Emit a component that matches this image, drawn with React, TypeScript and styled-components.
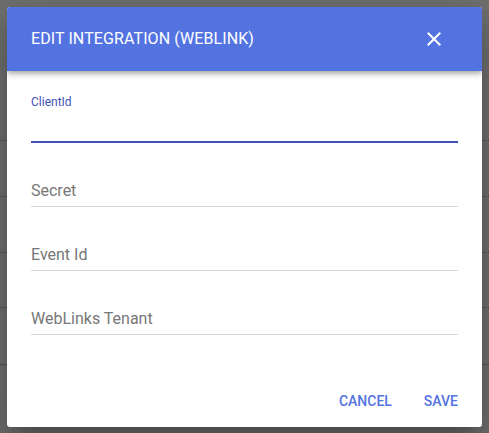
import React from "react";
import styled, { createGlobalStyle } from "styled-components";

const GlobalStyle = createGlobalStyle`
  html, body { margin: 0; padding: 0; }
  body {
    font-family: Roboto, "Noto Sans", "Liberation Sans", sans-serif;
    background: #ffffff;
    width: 489px;
    height: 433px;
    overflow: hidden;
  }
  * { box-sizing: border-box; }
`;

const Page = styled.div`
  width: 489px;
  height: 433px;
  position: relative;
  background: #ffffff;
  display: flex;
  flex-direction: column;
`;

const PageHead = styled.div`
  height: 141px;
  border-bottom: 1px dotted rgba(0, 0, 0, 0.35);
`;

const PageRow = styled.div<{ $solid?: boolean; $h: number }>`
  height: ${(p) => p.$h}px;
  border-bottom: 1px ${(p) => (p.$solid ? "solid rgba(0,0,0,0.25)" : "dotted rgba(0,0,0,0.35)")};
`;

const Overlay = styled.div`
  position: absolute;
  inset: 0;
  background: rgba(0, 0, 0, 0.56);
  display: flex;
  justify-content: center;
  align-items: flex-start;
  padding-top: 7px;
`;

const Dialog = styled.div`
  width: 475px;
  height: 420px;
  background: #ffffff;
  border-radius: 3px;
  overflow: hidden;
  display: flex;
  flex-direction: column;
  box-shadow: 0 11px 15px -7px rgba(0, 0, 0, 0.2), 0 24px 38px 3px rgba(0, 0, 0, 0.14),
    0 9px 46px 8px rgba(0, 0, 0, 0.12);
`;

const Header = styled.header`
  height: 64px;
  flex: none;
  background: #5373e1;
  display: flex;
  align-items: center;
  justify-content: space-between;
  padding: 0 24px;
  position: relative;
  z-index: 1;
  box-shadow: 0 2px 4px -1px rgba(0, 0, 0, 0.2), 0 4px 5px 0 rgba(0, 0, 0, 0.14),
    0 1px 10px 0 rgba(0, 0, 0, 0.12);
`;

const Title = styled.h2`
  margin: 0;
  color: #ffffff;
  font-size: 16px;
  font-weight: 400;
  line-height: 24px;
  letter-spacing: 0.1px;
`;

const IconButton = styled.button`
  width: 48px;
  height: 48px;
  border: none;
  background: transparent;
  padding: 12px;
  display: flex;
  align-items: center;
  justify-content: center;
  color: #ffffff;
  cursor: pointer;
`;

const Body = styled.div`
  padding: 8px 24px 40px;
  display: flex;
  flex-direction: column;
`;

const Field = styled.div<{ $focused?: boolean }>`
  height: 64px;
  display: flex;
  flex-direction: column;
  justify-content: ${(p) => (p.$focused ? "space-between" : "flex-end")};
  padding-top: ${(p) => (p.$focused ? "17px" : "0")};
  border-bottom: ${(p) => (p.$focused ? "2px solid #3f51b5" : "1px solid #d8d8d8")};
`;

const SmallLabel = styled.label`
  font-size: 12px;
  line-height: 12px;
  color: #3f51b5;
`;

const Input = styled.input`
  border: none;
  outline: none;
  background: transparent;
  font-family: inherit;
  font-size: 16px;
  line-height: 24px;
  height: 28px;
  padding: 0 0 4px;
  color: rgba(0, 0, 0, 0.87);
`;

const PlaceholderLabel = styled.label`
  font-size: 16px;
  line-height: 24px;
  padding-bottom: 3px;
  color: #777777;
`;

const Actions = styled.div`
  height: 52px;
  padding: 8px 8px;
  display: flex;
  justify-content: flex-end;
  align-items: center;
  gap: 0;
`;

const TextButton = styled.button`
  height: 36px;
  min-width: 64px;
  padding: 0 16px;
  border: none;
  background: transparent;
  font-family: inherit;
  font-size: 14px;
  font-weight: 500;
  letter-spacing: 0;
  text-transform: uppercase;
  color: #5373e1;
  cursor: pointer;
`;

const CloseIcon = () => (
  <svg width="24" height="24" viewBox="0 0 24 24" fill="currentColor">
    <path d="M19 6.41L17.59 5 12 10.59 6.41 5 5 6.41 10.59 12 5 17.59 6.41 19 12 13.41 17.59 19 19 17.59 13.41 12z" />
  </svg>
);

const fields = ["Secret", "Event Id", "WebLinks Tenant"];

export default function App() {
  return (
    <>
      <GlobalStyle />
      <Page>
        <PageHead />
        <PageRow $h={56} />
        <PageRow $h={56} />
        <PageRow $h={55} />
        <PageRow $h={57} $solid />
        <Overlay>
          <Dialog>
            <Header>
              <Title>EDIT INTEGRATION (WEBLINK)</Title>
              <IconButton aria-label="close">
                <CloseIcon />
              </IconButton>
            </Header>
            <Body>
              <Field $focused>
                <SmallLabel>ClientId</SmallLabel>
                <Input />
              </Field>
              {fields.map((f) => (
                <Field key={f}>
                  <PlaceholderLabel>{f}</PlaceholderLabel>
                </Field>
              ))}
            </Body>
            <Actions>
              <TextButton>Cancel</TextButton>
              <TextButton>Save</TextButton>
            </Actions>
          </Dialog>
        </Overlay>
      </Page>
    </>
  );
}
